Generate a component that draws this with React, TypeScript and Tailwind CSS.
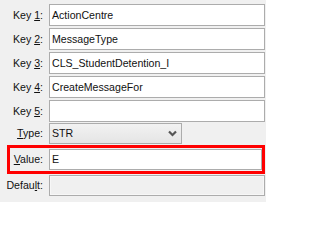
function Label({ pre, u, post, w = 'w-[43px]' }: { pre: string; u: string; post: string; w?: string }) {
  return (
    <div className={`${w} shrink-0 text-right whitespace-nowrap`}>
      {pre}
      <span className="underline underline-offset-[1px]">{u}</span>
      {post}
    </div>
  );
}

function Field({ value = '', disabled = false, className = '' }: { value?: string; disabled?: boolean; className?: string }) {
  return (
    <div
      className={`flex-1 flex items-center border border-[#acacac] pl-[2px] ${
        disabled ? 'bg-[#f0f0f0] shadow-[inset_0_0_0_1px_#f7f7f7]' : 'bg-white'
      } ${className}`}
    >
      {value}
    </div>
  );
}

const keys = [
  { n: '1', v: 'ActionCentre' },
  { n: '2', v: 'MessageType' },
  { n: '3', v: 'CLS_StudentDetention_I' },
  { n: '4', v: 'CreateMessageFor' },
  { n: '5', v: '' },
];

export default function App() {
  return (
    <div className="w-[266px] h-[202px] bg-[#f0f0f0] pt-[4px] pr-[1px] text-[10.6px] leading-none text-[#111] font-['Liberation_Sans',Arial,sans-serif] overflow-hidden">
      <div className="flex flex-col gap-[2px]">
        {keys.map((k) => (
          <div key={k.n} className="flex items-center gap-[6px] h-[22px]">
            <Label pre="Key " u={k.n} post=":" />
            <Field value={k.v} className="h-[22px]" />
          </div>
        ))}
      </div>

      {/* Type */}
      <div className="flex items-center gap-[6px] h-[21px] mt-[1px]">
        <Label pre="" u="T" post="ype:" />
        <div className="w-[133px] h-[21px] flex items-center justify-between border border-[#acacac] bg-gradient-to-b from-[#f2f2f2] to-[#e5e5e5] pl-[2px] pr-[4px]">
          <span>STR</span>
          <svg width="9" height="7" viewBox="0 0 9 7">
            <path d="M1 1.5 L4.5 5 L8 1.5" fill="none" stroke="#555" strokeWidth="2.2" />
          </svg>
        </div>
      </div>

      {/* Value, highlighted */}
      <div className="ml-[7px] mt-[1px] h-[29px] border-[3px] border-[#ff0000] flex items-center gap-[6px]">
        <Label pre="" u="V" post="alue:" w="w-[33px]" />
        <Field value="E" className="h-[21px]" />
      </div>

      {/* Default */}
      <div className="flex items-center gap-[6px] h-[21px] mt-[1px]">
        <Label pre="Defau" u="l" post="t:" />
        <Field disabled className="h-[21px]" />
      </div>
    </div>
  );
}
